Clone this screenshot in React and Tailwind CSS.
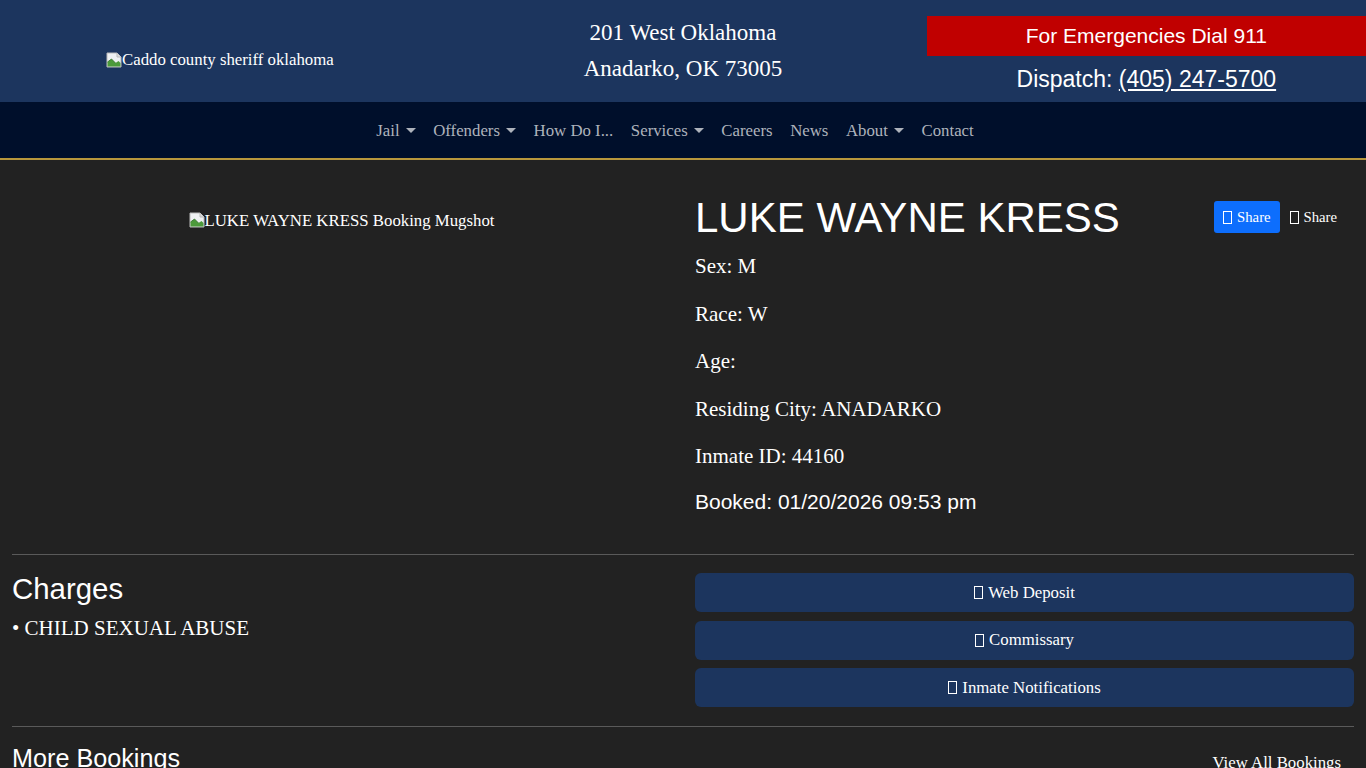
import React from 'react';

const serif = { fontFamily: '"Liberation Serif", "Times New Roman", serif' };
const sans = { fontFamily: '"Liberation Sans", Arial, sans-serif' };

function BrokenImg() {
  return (
    <svg width="16" height="16" viewBox="0 0 16 16" className="inline-block align-[-2px]">
      <path d="M1 1h10l4 4v10H1z" fill="#eef0f2" stroke="#b9b9b9" />
      <path d="M11 1v4h4" fill="#dcdcdc" stroke="#b9b9b9" />
      <path d="M1.5 14.5V10l4-3 4 4 3-2 2 2v3.5z" fill="#4c9a3b" />
      <path d="M1.5 10l4-3 4 4" fill="none" stroke="#2f6f26" strokeWidth="0.8" />
    </svg>
  );
}

function Tofu() {
  return <span className="mr-[5px] inline-block h-[13px] w-[9px] border border-current align-[-1px]" />;
}

function Caret() {
  return (
    <span className="ml-[6px] inline-block h-0 w-0 border-x-[5px] border-t-[5px] border-x-transparent border-t-current align-[3px]" />
  );
}

const navItems = [
  { label: 'Jail', caret: true },
  { label: 'Offenders', caret: true },
  { label: 'How Do I...' },
  { label: 'Services', caret: true },
  { label: 'Careers' },
  { label: 'News' },
  { label: 'About', caret: true },
  { label: 'Contact' },
];

const details = ['Sex: M', 'Race: W', 'Age:', 'Residing City: ANADARKO', 'Inmate ID: 44160'];

export default function App() {
  return (
    <div className="min-h-screen bg-[#222222] text-white" style={serif}>
      <header className="grid h-[102px] grid-cols-3 bg-[#1c355e]">
        <div className="flex items-center pl-[106px] pt-[18px] text-[16.8px]">
          <BrokenImg />
          <span>Caddo county sheriff oklahoma</span>
        </div>
        <div className="flex flex-col items-center pt-[15px] text-[23px] leading-[36px]">
          <span>201 West Oklahoma</span>
          <span>Anadarko, OK 73005</span>
        </div>
        <div className="flex flex-col items-stretch pl-[16px] pt-[16px]" style={sans}>
          <div className="flex h-[40px] items-center justify-center bg-[#c00000] text-[21px]">For Emergencies Dial 911</div>
          <div className="mt-[4px] text-center text-[23px] leading-[38px]">
            Dispatch: <a className="underline">(405) 247-5700</a>
          </div>
        </div>
      </header>

      <nav className="flex h-[58px] items-center justify-center border-b-2 border-[#b8973c] bg-[#000f2b] pr-[16px] pt-[2px] text-[16.8px] text-[#aeb3bc]">
        {navItems.map((item) => (
          <a key={item.label} className="px-[8.8px] py-[8px]">
            {item.label}
            {item.caret && <Caret />}
          </a>
        ))}
      </nav>

      <main className="px-[12px] pt-[33px]">
        <div className="grid grid-cols-2 gap-x-[24px]">
          <div className="flex justify-center pt-[19px] text-[16.8px]">
            <div className="leading-[18px]">
              <BrokenImg />
              <span>LUKE WAYNE KRESS Booking Mugshot</span>
            </div>
          </div>
          <div>
            <div className="flex items-start justify-between">
              <h1 className="mb-[8px] text-[42px] leading-[50px]" style={sans}>
                LUKE WAYNE KRESS
              </h1>
              <div className="mt-[8px] flex items-center text-[14.7px]">
                <a className="flex h-[32px] items-center rounded-[3px] bg-[#0d6efd] px-[9px]">
                  <Tofu />
                  Share
                </a>
                <a className="flex h-[32px] items-center px-[10px] pr-[17px]">
                  <Tofu />
                  Share
                </a>
              </div>
            </div>
            {details.map((d) => (
              <p key={d} className="mb-[16px] text-[21px] leading-[31.5px]">{d}</p>
            ))}
            <p className="-mt-[3px] mb-[16px] text-[21px] leading-[31.5px]" style={sans}>
              Booked: 01/20/2026 09:53 pm
            </p>
          </div>
        </div>

        <hr className="mb-[17px] mt-[21px] border-t border-[#5a5a5a]" />

        <div className="grid grid-cols-2 gap-x-[24px]">
          <div>
            <h2 className="mb-[7px] text-[29.4px] leading-[34px]" style={sans}>Charges</h2>
            <p className="text-[21px] leading-[31.5px]">• CHILD SEXUAL ABUSE</p>
          </div>
          <div className="flex flex-col gap-[8.5px] pt-[1px]">
            {['Web Deposit', 'Commissary', 'Inmate Notifications'].map((b) => (
              <a key={b} className="flex h-[39px] items-center justify-center rounded-[6px] bg-[#1c355e] text-[16.8px]">
                <Tofu />
                {b}
              </a>
            ))}
          </div>
        </div>

        <hr className="mb-[15px] mt-[19px] border-t border-[#5a5a5a]" />

        <div className="flex items-start justify-between">
          <h3 className="pt-[1px] text-[25.2px] leading-[30px]" style={sans}>More Bookings</h3>
          <a className="px-[13px] pt-[8px] text-[16.8px] leading-[25px]">View All Bookings</a>
        </div>
      </main>
    </div>
  );
}
